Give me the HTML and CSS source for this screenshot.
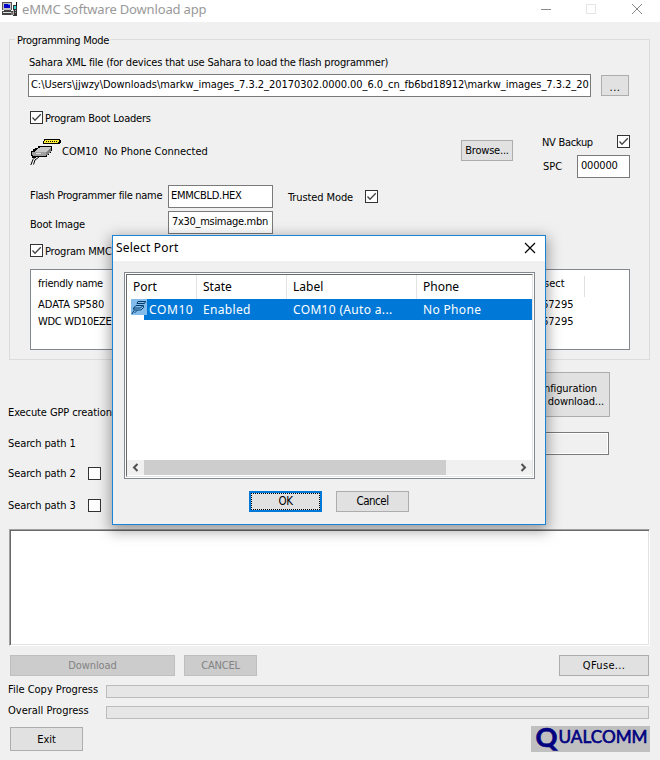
FILE: index.html
```
<!DOCTYPE html>
<html lang="en">
<head>
<meta charset="utf-8">
<title>eMMC Software Download app</title>
<link rel="stylesheet" href="styles.css">
</head>
<body>
<svg class="defs" width="0" height="0">
  <symbol id="tick" viewBox="0 0 13 13"><path d="M2.5 6.5 5 9.3 10.8 3.2" fill="none" stroke="#444" stroke-width="1.3"/></symbol>
</svg>
<div class="window">
  <header class="titlebar">
    <svg class="app-icon" viewBox="0 0 17 17" shape-rendering="crispEdges">
      <path d="M1 2h10v8H1z" fill="#c0c0c0"/><path d="M1 2h10v1H1zM1 2h1v8H1zM10 3h1v7h-1z" fill="#555"/>
      <path d="M3 4h6v4H3z" fill="#0000c8"/><path d="M7 4h2v1H7z" fill="#4a8cff"/>
      <path d="M3 10h7v1H3zM1 11h11v4H1z" fill="#444"/><path d="M2 12h8v1H2z" fill="#ddd"/>
      <path d="M12 5h4v11h-4z" fill="#333"/><path d="M15 2h1v4h-1z" fill="#111"/><path d="M13 6h2v3h-2z" fill="#35d5d5"/><path d="M12 10h1v5h-1zM14 10h1v1h-1zM14 12h1v1h-1z" fill="#aaa"/><path d="M10 12h2v3h-2z" fill="#777"/>
    </svg>
    <h1 class="app-title">eMMC Software Download app</h1>
    <svg class="caption" viewBox="0 0 110 16" fill="none">
      <path d="M1 9.5h10" stroke="#8b8b8b"/><path d="M46.500 4.500h9v9h-9z" stroke="#e5e5e5"/><path d="M92 4l10 10M102 4l-10 10" stroke="#888"/>
    </svg>
  </header>

  <fieldset class="group">
    <legend class="ls-legend">Programming Mode</legend>
    <div class="sahara">Sahara XML file (for devices that use Sahara to load the flash programmer)</div>
    <div class="path-row">
      <div class="field path"><span>C:\Users\jjwzy\Downloads\markw_images_7.3.2_20170302.0000.00_6.0_cn_fb6bd18912\markw_images_7.3.2_20</span></div>
      <div class="btn dots">...</div>
    </div>
    <div class="check-row boot-check"><svg class="cb"><use href="#tick"/></svg><span class="tight-2">Program Boot Loaders</span></div>
    <div class="phone-row">
      <svg class="cable" viewBox="0 0 31 27" shape-rendering="crispEdges">
        <path d="M14 0h16v1h1v3h-1v1H13V2h1z" fill="#000"/><path d="M15 1h14v2h-1v1H14V2h1z" fill="#ffee35"/><path d="M16 2h1v1h-1zM18 2h1v1h-1zM20 2h1v1h-1zM22 2h1v1h-1zM24 2h1v1h-1zM26 2h1v1h-1z" fill="#000"/>
        <path d="M10 7h12v5h-1v2h-2v2h-2v2H6v1H2v-2H1v-5h2v-2h2V9h3V7z" fill="#000"/>
        <path d="M10 8h11l-4 5H4l3-3h1V9h2z" fill="#c8c8c8"/><path d="M2 13h14v3l-1 1H3l-1-1z" fill="#a0a0a0"/><path d="M20 9h1v3l-4 4h-1v-3z" fill="#808080"/><path d="M6 14h5v1H6z" fill="#ddd"/>
        <path d="M5.500 18 3 20.500 .8 26M9 18 5 21 3.500 25.500" fill="none" stroke="#000" shape-rendering="auto"/>
      </svg>
      <span class="com">COM10&nbsp; No Phone Connected</span>
      <div class="btn browse"><span class="tight-2">Browse...</span></div>
      <div class="nv">
        <div class="nv-line"><span class="tight-3">NV Backup</span><svg class="cb"><use href="#tick"/></svg></div>
        <div class="spc-line"><span>SPC</span><div class="field spc"><span class="tight-2">000000</span></div></div>
      </div>
    </div>
    <div class="file-row flash-row">
      <span class="file-label tight-3">Flash Programmer file name</span><div class="field file"><span class="tight-3">EMMCBLD.HEX</span></div>
      <span class="trusted tight-1">Trusted Mode</span><svg class="cb"><use href="#tick"/></svg>
    </div>
    <div class="file-row boot-row"><span class="file-label tight-2">Boot Image</span><div class="field file boot-name"><span class="tight-3">7x30_msimage.mbn</span></div></div>
    <div class="check-row mmc-check"><svg class="cb"><use href="#tick"/></svg><span class="tight-2">Program MMC</span></div>
    <div class="disks">
      <div class="disk-names"><span class="tight-3">friendly name</span><span>ADATA SP580</span><span class="tight-3">WDC WD10EZE</span></div>
      <div class="disk-sect"><span class="sect">sect</span><span class="num">67295</span><span class="num">67295</span></div>
    </div>
  </fieldset>

  <div class="gpp">
    <span class="gpp-label tight-1">Execute GPP creation</span>
    <div class="btn config"><span class="cfg1 tight-1">Configuration</span><span class="cfg2 tight-1">download...</span></div>
  </div>
  <div class="search s1"><span class="tight-1">Search path 1</span><div class="field search-field"></div></div>
  <div class="search s2"><span class="tight-1">Search path 2</span><svg class="cb"></svg></div>
  <div class="search s3"><span class="tight-1">Search path 3</span><svg class="cb"></svg></div>

  <div class="log"></div>

  <div class="actions">
    <div class="btn off download"><span class="tight-1">Download</span></div>
    <div class="btn off cancel"><span class="tight-2">CANCEL</span></div>
    <div class="btn qfuse"><span class="wide-3">QFuse...</span></div>
  </div>
  <div class="progress p1"><span>File Copy Progress</span><div class="bar"></div></div>
  <div class="progress p2"><span>Overall Progress</span><div class="bar"></div></div>
  <footer class="footer">
    <div class="btn exit"><span>Exit</span></div>
    <svg class="logo" viewBox="0 0 119 26">
      <text class="logo-q" x="4.500" y="20.500" textLength="22" lengthAdjust="spacingAndGlyphs">Q</text>
      <text class="logo-rest" x="27.500" y="16.500" textLength="89" lengthAdjust="spacingAndGlyphs">UALCOMM</text>
    </svg>
  </footer>

  <section class="dialog">
    <div class="dialog-title"><span class="wide-2">Select Port</span>
      <svg class="close" viewBox="0 0 12 12"><path d="M1 1l10 10M11 1 1 11" stroke="#000" stroke-width="1.200"/></svg>
    </div>
    <div class="ports">
      <div class="ports-inner">
        <div class="cols head"><span>Port</span><span>State</span><span>Label</span><span>Phone</span></div>
        <div class="cols selected">
          <span class="port-cell"><svg class="port-icon" viewBox="0 0 16 16"><path fill="#83bbea" d="M0 0h16v16H0z"/><path d="M7 2.500h7.500l-1 2H6zM5 6.500h7.500v2L10 11H3L2.500 9zM3 11.500 1 15M6 11.500 3.500 14M3 9h6.500l2-2" fill="none" stroke="#003c70"/></svg><span class="wide-6">COM10</span></span>
          <span class="wide-3">Enabled</span><span class="wide-3">COM10 (Auto a...</span><span class="wide-3">No Phone</span>
        </div>
        <div class="space"></div>
        <div class="scroll">
          <svg viewBox="0 0 17 15"><path d="M10.500 4 7 7.500l3.500 3.500" fill="none" stroke="#505050" stroke-width="2"/></svg>
          <div class="thumb"></div>
          <svg class="right" viewBox="0 0 17 15"><path d="M6.500 4 10 7.500 6.500 11" fill="none" stroke="#505050" stroke-width="2"/></svg>
        </div>
      </div>
    </div>
    <div class="dialog-buttons"><div class="btn ok"><span>OK</span></div><div class="btn"><span>Cancel</span></div></div>
  </section>
</div>
</body>
</html>
```
FILE: styles.css
```
* { box-sizing: border-box; }
body { margin: 0; background: #f0f0f0; color: #000; font: 11px/16px "DejaVu Sans Condensed", "DejaVu Sans", sans-serif; }
.defs { position: absolute; }
svg { display: block; flex: none; }
span { white-space: nowrap; }
.tight-1 { letter-spacing: -.1px; }
.tight-2 { letter-spacing: -.2px; }
.tight-3 { letter-spacing: -.3px; }
.wide-2 { letter-spacing: .2px; }
.wide-3 { letter-spacing: .33px; }
.wide-6 { letter-spacing: .6px; }
.window { position: relative; width: 660px; height: 760px; overflow: hidden; background: #f0f0f0; }

.titlebar { display: flex; height: 22px; background: #fff; padding-left: 1px; }
.app-icon { width: 17px; height: 17px; }
.app-title { margin: 0 0 0 4px; font: 13px/18px "Noto Sans", sans-serif; letter-spacing: -.16px; color: #999; white-space: nowrap; }
.caption { width: 110px; height: 16px; margin-left: auto; margin-right: 10px; }

.group { position: relative; display: block; width: 641px; height: 321px; margin: 17px 0 0 9px; padding: 0; border: 1px solid #dcdcdc; min-width: 0; }
.group legend { float: left; height: 14px; margin: -7px 0 0 5px; padding: 0 2px; background: #f0f0f0; letter-spacing: -.3px; }
.sahara { clear: both; height: 22px; padding: 8px 0 0 19px; white-space: nowrap; letter-spacing: -.185px; }
.path-row { display: flex; margin: 5px 0 0 18px; }
.field { height: 23px; background: #fff; border: 1px solid #7a7a7a; padding: 2px 2px 0; }
.path { width: 563px; padding-right: 0; }
.path span { letter-spacing: -.045px; }
.btn { display: flex; align-items: center; justify-content: center; height: 21px; background: #e1e1e1; border: 1px solid #adadad; line-height: 13px; }
.dots { width: 28px; margin: 1px 0 0 10px; padding-top: 3px; letter-spacing: .5px; }
.cb { width: 13px; height: 13px; background: #fff; outline: 1px solid #333; outline-offset: -1px; }
.check-row { display: flex; align-items: center; height: 13px; margin-left: 20px; gap: 2px; }
.check-row span { margin-top: 2px; }
.boot-check { margin-top: 14px; }

.phone-row { display: flex; height: 43px; margin: 11px 0 0 20px; }
.cable { width: 31px; height: 27px; margin-top: 4px; }
.com { width: 397px; margin: 9px 0 0 1px; }
.browse { width: 52px; margin: 5px 0 0 2px; }
.nv { width: 88px; margin-left: 29px; }
.nv-line { display: flex; justify-content: space-between; height: 20px; }
.spc-line { display: flex; justify-content: space-between; padding-left: 1px; }
.spc-line > span { margin-top: 4px; }
.spc { width: 53px; padding-left: 3px; }
.file-row { display: flex; margin-left: 20px; }
.flash-row { margin-top: 7px; }
.flash-row .cb { margin: 5px 0 0; }
.boot-row { margin-top: 3px; }
.file-label { width: 138px; margin-top: 3px; }
.boot-row .file-label { margin-top: 6px; }
.file { width: 105px; }
.boot-name { padding-left: 3px; }
.trusted { width: 77px; margin: 5px 0 0 15px; }
.mmc-check { margin-top: 10px; }
.disks { display: flex; justify-content: space-between; width: 600px; height: 81px; margin: 12px 0 0 20px; padding-top: 6px; background: #fff; border: 1px solid #828790; }
.disk-names, .disk-sect { display: flex; flex-direction: column; }
.disk-names { padding-left: 7px; }
.disks span { height: 17px; }
.disks span:first-child { height: 21px; }
.disk-sect { width: 90px; }
.disk-sect .sect { width: 46px; padding-left: 5px; border-right: 1px solid #e0e0e0; }
.num { padding-left: 3px; }

.gpp { display: flex; justify-content: space-between; margin: 12px 50px 0 8px; }
.gpp-label { margin-top: 33px; height: 12px; }
.config { width: 120px; height: 45px; flex-direction: column; align-items: flex-end; }
.cfg1 { margin-right: 12px; }
.cfg2 { margin-right: 5px; }
.search { display: flex; height: 23px; margin-left: 8px; align-items: center; }
.search > span { width: 80px; }
.s1 { margin-top: 15px; }
.search-field { width: 160px; margin-left: 361px; background: #f0f0f0; box-shadow: inset 0 0 0 1px #fff; }
.s2 { margin-top: 7px; }
.s3 { margin-top: 9px; }
.log { width: 641px; height: 117px; margin: 12px 0 0 9px; background: #fff; border: 1px solid; border-color: #a0a0a0 #fff #fff #a0a0a0; box-shadow: inset 1px 1px #696969, inset -1px -1px #e3e3e3; }
.actions { display: flex; margin: 9px 11px 0 10px; }
.off { background: #ccc; border-color: #bfbfbf; color: #838383; }
.download { width: 165px; }
.cancel { width: 73px; margin-left: 9px; }
.qfuse { width: 90px; margin-left: auto; }
.progress { display: flex; justify-content: space-between; height: 13px; margin: 9px 11px 0 8px; }
.progress span { margin-top: -3px; }
.p2 { margin-top: 8px; }
.bar { width: 543px; height: 13px; background: #e6e6e6; border: 1px solid #bcbcbc; }
.footer { display: flex; justify-content: space-between; margin: 7px 10px 0; }
.exit { width: 73px; height: 24px; margin-top: 1px; }
.logo { width: 119px; height: 26px; background: #c0c0c0; fill: #000080; overflow: visible; }
.logo-q { font: bold 26px "Lato", sans-serif; stroke: #000080; stroke-width: .6px; }
.logo-rest { font: 16.5px "Lato", sans-serif; stroke: #000080; stroke-width: .6px; }
.gpp + .s1 { margin-top: 15px; }
.gpp { height: 45px; }

.dialog { position: absolute; left: 112px; top: 235px; width: 434px; height: 290px; background: #f0f0f0; border: 1px solid #1883d7; box-shadow: 0 4px 13px 2px rgba(0,0,0,.36); font: 12px/16px "Noto Sans", sans-serif; }
.dialog-title { display: flex; justify-content: space-between; height: 25px; padding: 4px 9px 0 3px; background: #fff; }
.close { width: 12px; height: 12px; margin-top: 2px; }
.ports { width: 411px; height: 207px; margin: 11px 0 0 11px; padding: 1px; border: 1px solid #828790; background: #fff; }
.ports-inner { display: flex; flex-direction: column; height: 203px; background: #fff; border: 1px solid; border-color: #696969 #e3e3e3 #e3e3e3 #696969; padding-bottom: 1px; }
.cols { display: grid; grid-template-columns: 70px 90px 130px 115px; }
.head { height: 24px; line-height: 24px; }
.head span { padding-left: 6px; border-right: 1px solid #e3e3e3; }
.head span:last-child { border: 0; }
.selected { height: 21px; line-height: 21px; color: #fff; background: linear-gradient(90deg, #fff 17px, #0078d7 17px); }
.selected > span { padding-left: 6px; }
.selected > .port-cell { display: flex; padding-left: 4px; gap: 2px; }
.port-icon { width: 16px; height: 16px; }
.space { flex: 1; }
.scroll { display: flex; height: 15px; background: #f0f0f0; }
.scroll svg { width: 17px; height: 15px; }
.scroll .right { margin-left: auto; }
.thumb { width: 302px; background: #cdcdcd; }
.dialog-buttons { display: flex; gap: 14px; margin: 12px 0 0 136px; }
.dialog-buttons .btn { width: 73px; font: 11.500px/13px "DejaVu Sans Condensed", sans-serif; letter-spacing: -.5px; }
.dialog-buttons .ok { border: 2px solid #0078d7; outline: 1px dotted #000; outline-offset: -3px; }
```
